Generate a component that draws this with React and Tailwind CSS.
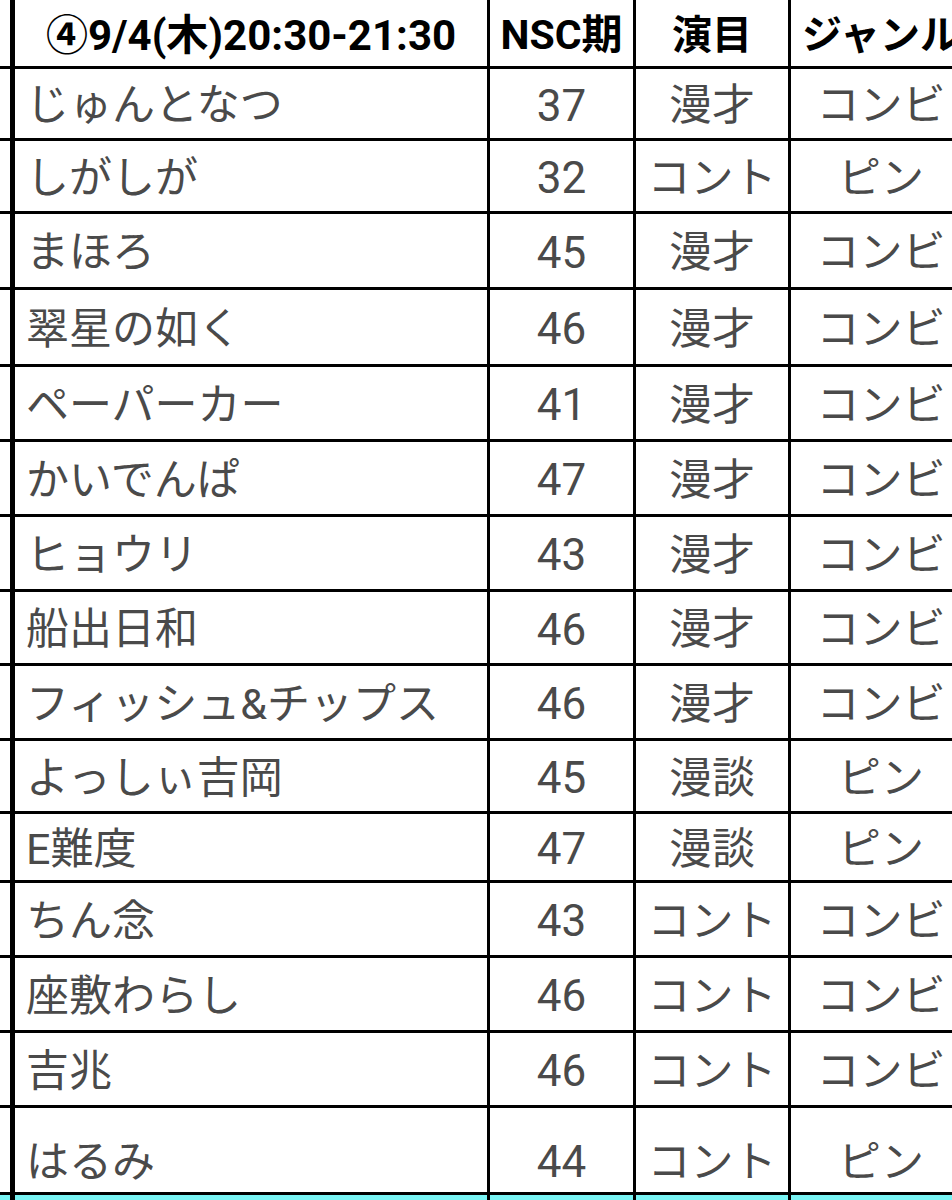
import React from 'react';

const rows = [
  { name: 'じゅんとなつ', nsc: '37', act: '漫才', genre: 'コンビ', h: 'h-[72px]' },
  { name: 'しがしが', nsc: '32', act: 'コント', genre: 'ピン', h: 'h-[73px]' },
  { name: 'まほろ', nsc: '45', act: '漫才', genre: 'コンビ', h: 'h-[76px]' },
  { name: '翠星の如く', nsc: '46', act: '漫才', genre: 'コンビ', h: 'h-[77px]' },
  { name: 'ペーパーカー', nsc: '41', act: '漫才', genre: 'コンビ', h: 'h-[75px]' },
  { name: 'かいでんぱ', nsc: '47', act: '漫才', genre: 'コンビ', h: 'h-[75px]' },
  { name: 'ヒョウリ', nsc: '43', act: '漫才', genre: 'コンビ', h: 'h-[75px]' },
  { name: '船出日和', nsc: '46', act: '漫才', genre: 'コンビ', h: 'h-[74px]' },
  { name: 'フィッシュ&チップス', nsc: '46', act: '漫才', genre: 'コンビ', h: 'h-[75px]' },
  { name: 'よっしぃ吉岡', nsc: '45', act: '漫談', genre: 'ピン', h: 'h-[73px]' },
  { name: 'E難度', nsc: '47', act: '漫談', genre: 'ピン', h: 'h-[69px]' },
  { name: 'ちん念', nsc: '43', act: 'コント', genre: 'コンビ', h: 'h-[75px]' },
  { name: '座敷わらし', nsc: '46', act: 'コント', genre: 'コンビ', h: 'h-[75px]' },
  { name: '吉兆', nsc: '46', act: 'コント', genre: 'コンビ', h: 'h-[75px]' },
  { name: 'はるみ', nsc: '44', act: 'コント', genre: 'ピン', h: 'h-[87px]', last: true },
];

const font = { fontFamily: 'Roboto, "Noto Sans CJK JP", sans-serif' };

const Row = ({ h, children, bg = 'bg-white' }) => (
  <div className={`flex ${h} ${bg} border-b-[3px] border-black`}>
    <div className="w-[10px] shrink-0" />
    <div className="w-[5px] shrink-0 bg-black" />
    {children}
  </div>
);

const App = () => {
  return (
    <div className="h-[1200px] w-[952px] overflow-hidden bg-white" style={font}>
      <div className="w-[1000px]">
        <Row h="h-[69px]">
          <div className="flex w-[475px] shrink-0 items-center justify-center whitespace-nowrap border-r-[3px] border-black pt-[5px] text-[42px] font-bold leading-none text-black">
            ④9/4(木)20:30-21:30
          </div>
          <div className="flex w-[146px] shrink-0 items-center justify-center border-r-[3px] border-black pt-[5px] text-[41px] font-bold leading-none text-black">
            NSC期
          </div>
          <div className="flex w-[155px] shrink-0 items-center justify-center border-r-[3px] border-black pt-[5px] text-[40px] font-bold leading-none text-black">
            演目
          </div>
          <div className="flex w-[180px] shrink-0 items-center justify-center whitespace-nowrap pt-[5px] text-[40px] font-bold leading-none text-black">
            ジャンル
          </div>
        </Row>
        {rows.map((r) => (
          <Row key={r.name} h={r.h}>
            <div className={`flex w-[475px] shrink-0 items-center whitespace-nowrap border-r-[3px] border-black pl-[11px] text-[43px] leading-none text-[#4a4a4a] ${r.last ? 'pt-[24px]' : 'pt-[4px]'}`}>
              {r.name}
            </div>
            <div className={`flex w-[146px] shrink-0 items-center justify-center border-r-[3px] border-black text-[44px] leading-none text-[#4a4a4a] ${r.last ? 'pt-[24px]' : 'pt-[4px]'}`}>
              {r.nsc}
            </div>
            <div className={`flex w-[155px] shrink-0 items-center justify-center whitespace-nowrap border-r-[3px] border-black text-[43px] leading-none text-[#4a4a4a] ${r.last ? 'pt-[24px]' : 'pt-[4px]'}`}>
              {r.act}
            </div>
            <div className={`flex w-[180px] shrink-0 items-center justify-center whitespace-nowrap text-[43px] leading-none text-[#4a4a4a] ${r.last ? 'pt-[24px]' : 'pt-[4px]'}`}>
              {r.genre}
            </div>
          </Row>
        ))}
        <div className="flex h-[40px] bg-[#78f4f4]">
          <div className="w-[10px] shrink-0" />
          <div className="w-[5px] shrink-0 bg-black" />
          <div className="w-[475px] shrink-0 border-r-[3px] border-black" />
          <div className="w-[146px] shrink-0 border-r-[3px] border-black" />
          <div className="w-[155px] shrink-0 border-r-[3px] border-black" />
        </div>
      </div>
    </div>
  );
};

export default App;
